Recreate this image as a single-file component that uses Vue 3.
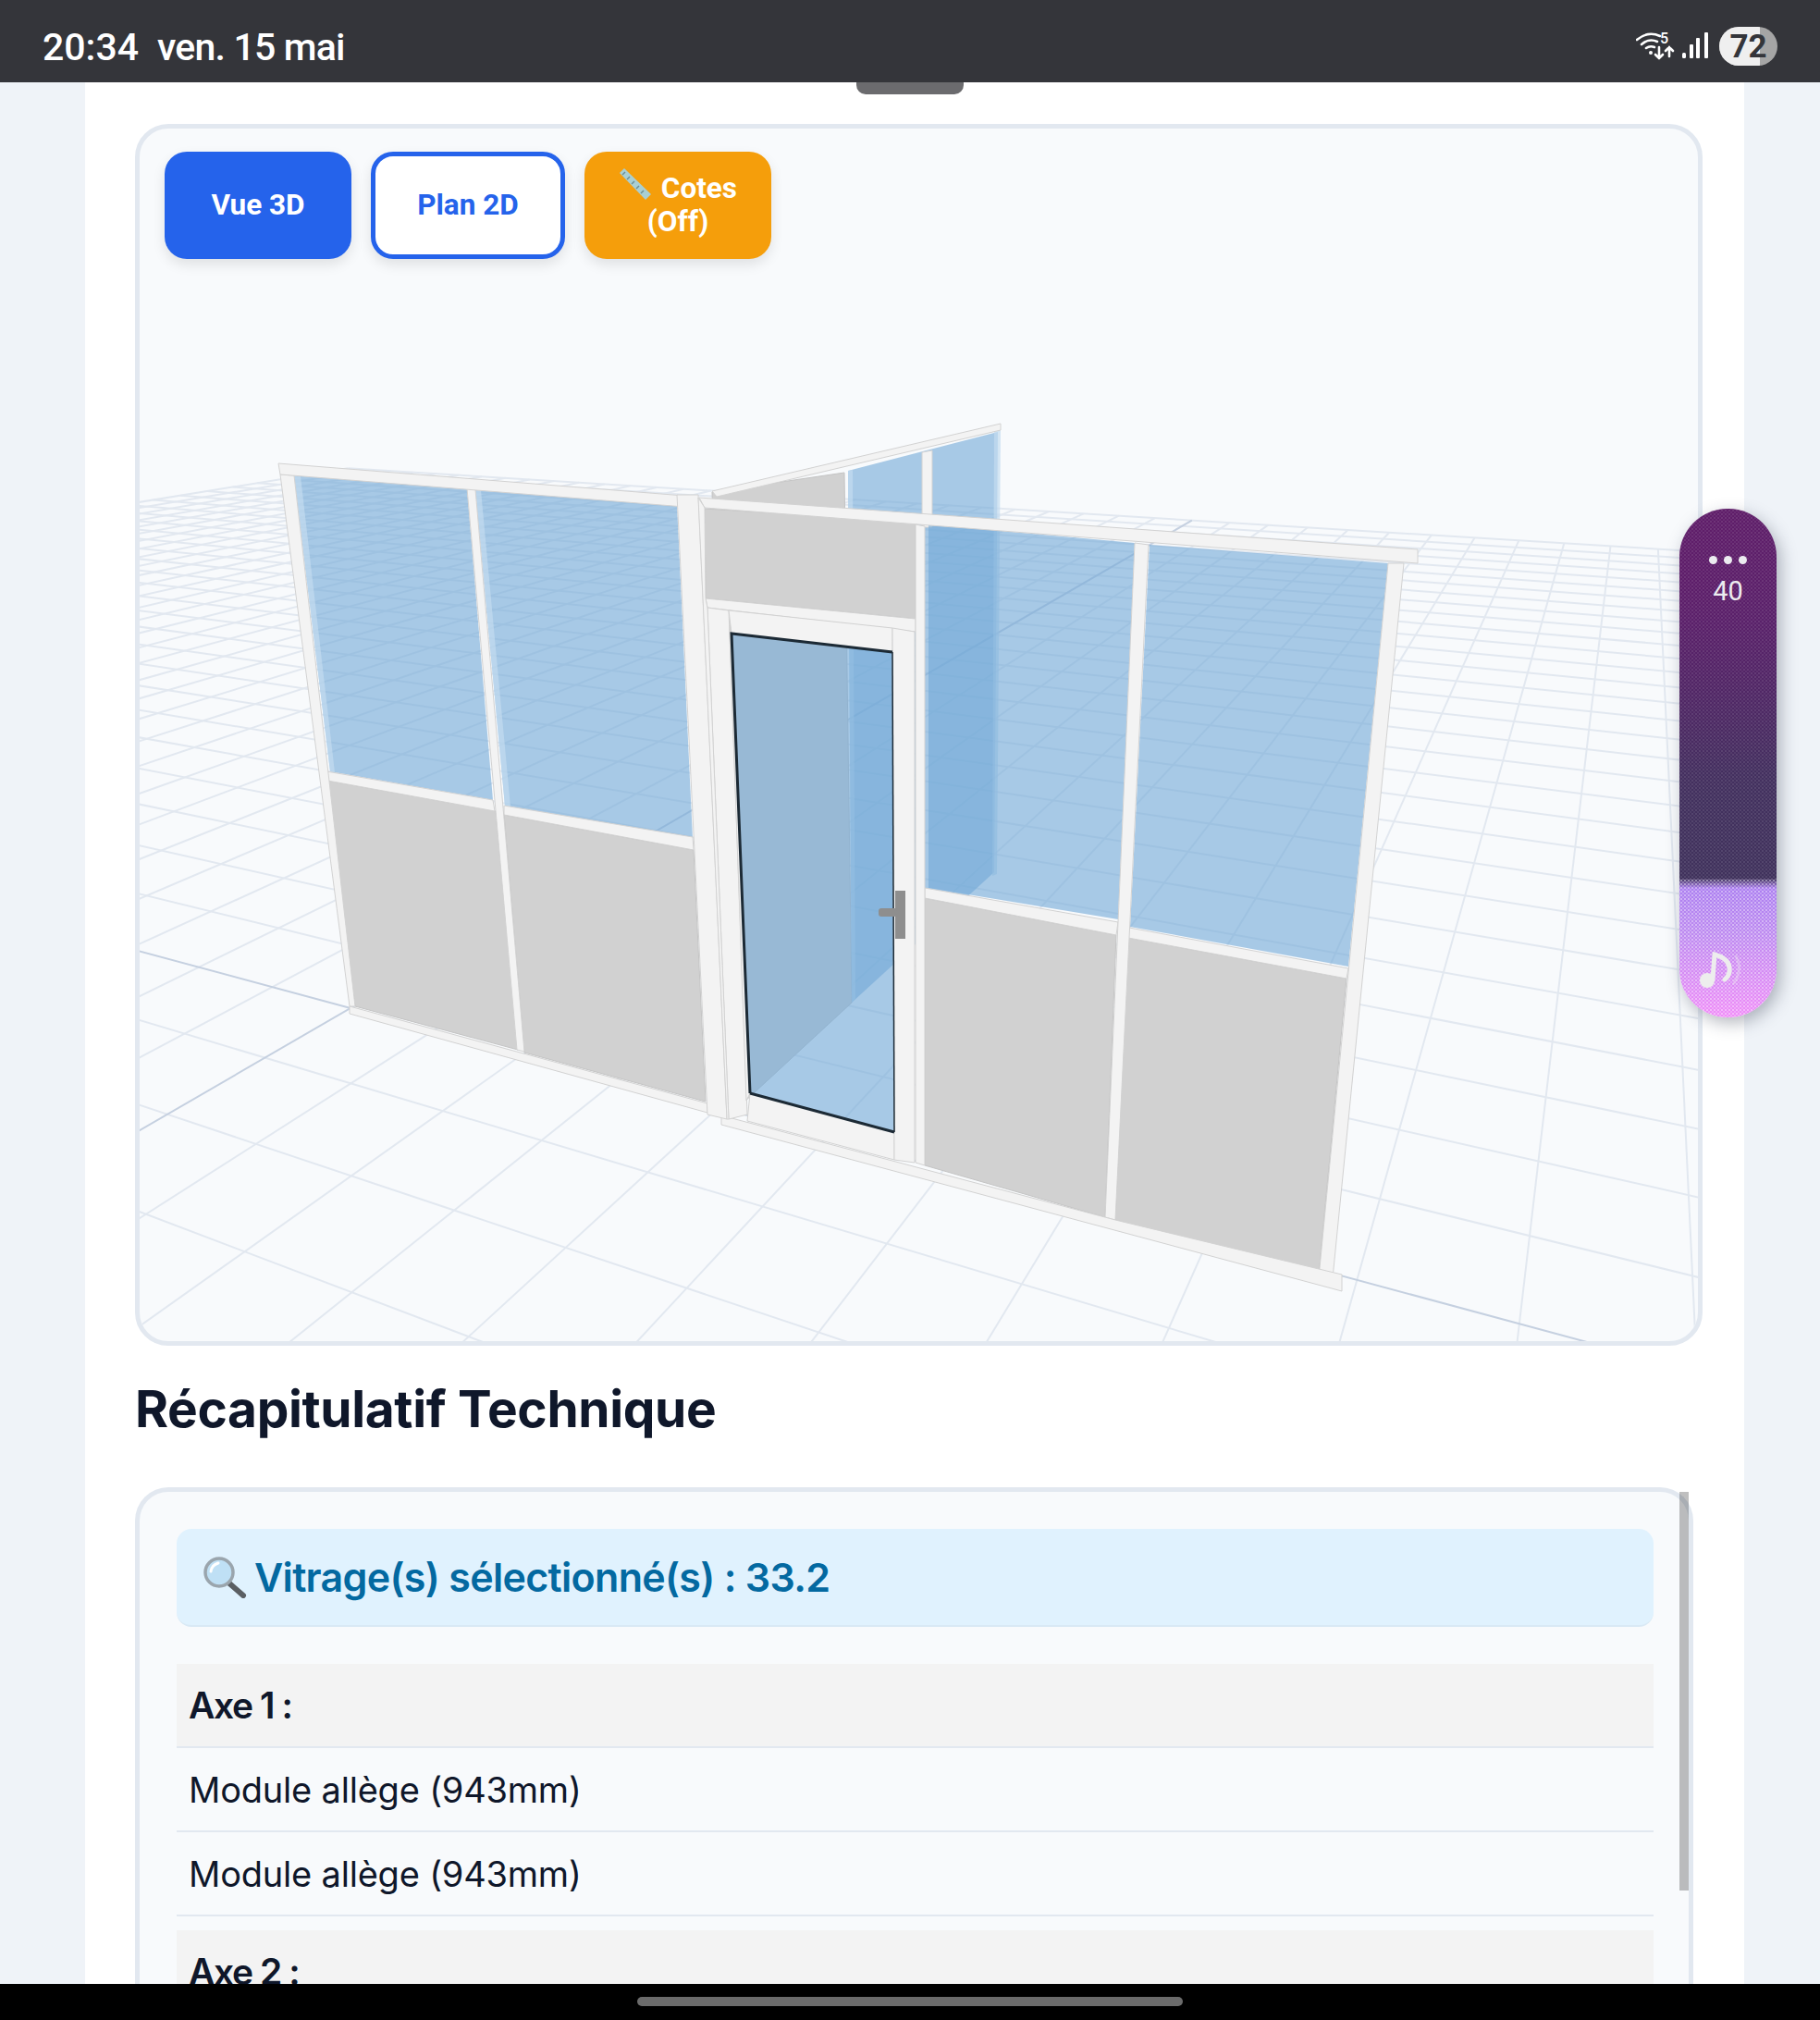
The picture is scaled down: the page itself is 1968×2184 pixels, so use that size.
<template>
  <div class="page">
    <header class="status">
      <div class="clock">
        <span class="clock-time">20:34</span>
        <span class="clock-date">ven. 15 mai</span>
      </div>
      <div class="status-icons">
        <svg class="wifi" width="42" height="38" viewBox="0 -6 42 38">
          <g fill="none" stroke="#fff" stroke-width="2.6" stroke-linecap="round">
            <path d="M1 9 Q13 -1 26 5" />
            <path d="M6 14 Q14 7 23 11" />
            <path d="M11 18 Q15 15 20 17" />
            <path d="M25 17 V29 M21 25 L25 29 L29 25" />
            <path d="M36 27 V17 M32 21 L36 17 L40 21" />
          </g>
          <circle cx="16" cy="23" r="2" fill="#fff" />
          <text x="26" y="13" class="wifi-five">5</text>
        </svg>
        <svg class="signal" width="28" height="30" viewBox="0 0 28 30">
          <rect x="0" y="22" width="4" height="6" rx="1.5" fill="#fff" />
          <rect x="8" y="13" width="4" height="15" rx="1" fill="#fff" />
          <rect x="15" y="6" width="4" height="22" rx="1" fill="#fff" />
          <rect x="24" y="0" width="4" height="28" rx="1" fill="#fff" />
        </svg>
        <div class="battery">
          <div class="battery-fill"></div>
          <span class="battery-text">72</span>
        </div>
      </div>
    </header>

    <main class="main">
      <div class="sheet">
        <section class="viewer">
          <svg class="scene" width="1685" height="1311" viewBox="151 139 1685 1311">
            <line
              v-for="(l, i) in gridLines"
              :key="i"
              :x1="l.x1"
              :y1="l.y1"
              :x2="l.x2"
              :y2="l.y2"
              :stroke="l.axis ? '#c5d0e0' : '#e2e8f0'"
              stroke-width="2"
            />
            <polygon
              v-for="(s, i) in shapes"
              :key="'s' + i"
              :points="s.pts"
              :class="s.kind"
            />
            <path class="door-edge" d="M811 1182 L791 685 L965 705" />
            <path class="door-edge" d="M811 1182 L967 1224" />
            <path class="door-thin" d="M965 705 L967 1224" />
            <rect x="968" y="963" width="11" height="52" fill="#8e8e8e" />
            <rect x="950" y="982" width="20" height="9" rx="3" fill="#8e8e8e" />
          </svg>

          <div class="view-tabs">
            <button class="tab tab-active">Vue 3D</button>
            <button class="tab tab-plan">Plan 2D</button>
            <button class="tab tab-cotes">
              <svg class="ruler" width="36" height="34" viewBox="0 0 36 34">
                <polygon points="1,5 6,0 35,28 29,34" fill="#a9cfd3" />
                <path d="M7 4 L4 7 M12 9 L9 12 M17 14 L14 17 M22 19 L19 22 M27 24 L24 27" stroke="#6f8f94" stroke-width="1.5" />
              </svg>
              Cotes<br />(Off)
            </button>
          </div>
        </section>

        <h2 class="title">Récapitulatif Technique</h2>

        <section class="recap">
          <div class="glazing">
            <svg class="loupe" width="48" height="46" viewBox="0 0 48 46">
              <path d="M28 29 L44 43" stroke="#5b5f63" stroke-width="6" stroke-linecap="round" />
              <circle cx="18" cy="18" r="15" fill="#bfe0f5" stroke="#9aa5ad" stroke-width="3.5" />
              <path d="M9 17 Q10 10 17 8" stroke="#fff" stroke-width="3" fill="none" stroke-linecap="round" />
            </svg>
            <span>Vitrage(s) sélectionné(s) : 33.2</span>
          </div>

          <div v-for="group in axes" :key="group.name" class="group">
            <div class="row row-head">{{ group.name }}</div>
            <div v-for="(m, i) in group.modules" :key="i" class="row">{{ m }}</div>
          </div>

          <div class="scroll-thumb"></div>
        </section>
      </div>
    </main>

    <footer class="navbar">
      <div class="home-pill"></div>
    </footer>

    <div class="handle"></div>

    <aside class="volume">
      <div class="volume-track">
        <div class="dots"><i></i><i></i><i></i></div>
        <span class="volume-num">40</span>
      </div>
      <div class="volume-fill">
        <svg class="note" width="50" height="44" viewBox="0 0 50 44">
          <circle cx="9" cy="31" r="8" fill="#ededed" />
          <path d="M15 30 L17 3 Q35 8 33 22 Q32 27 28 30" fill="none" stroke="#ededed" stroke-width="5" stroke-linecap="round" />
          <path d="M40 5 Q48 18 38 34" fill="none" stroke="#ededed" stroke-width="3" opacity="0.35" stroke-linecap="round" />
        </svg>
      </div>
    </aside>
  </div>
</template>

<script setup>
// floor grid of the 3D view, projected by hand from two vanishing points
const V1 = [-2421, 334]
const V2 = [1778, 279]
const O = [379, 1090]
const p = -0.0311
const q = 0.062
const N = 30

const project = (a, b) => {
  const d = p * a + q * b + 1
  return [
    (p * V1[0] * a + q * V2[0] * b + O[0]) / d,
    (p * V1[1] * a + q * V2[1] * b + O[1]) / d,
  ]
}

const gridLines = []
for (let i = -N; i <= N; i++) {
  const bMin = Math.max(-N, (0.05 - 1 - p * i) / q)
  if (bMin < N) {
    const [x1, y1] = project(i, bMin)
    const [x2, y2] = project(i, N)
    gridLines.push({ x1, y1, x2, y2, axis: i === 0 })
  }
  const aMax = Math.min(N, (0.95 + q * i) / -p)
  if (aMax > -N) {
    const [x1, y1] = project(-N, i)
    const [x2, y2] = project(aMax, i)
    gridLines.push({ x1, y1, x2, y2, axis: i === 0 })
  }
}
gridLines.sort((a, b) => a.axis - b.axis)

// partition, in paint order: back wall first, front frames last
const shapes = [
  { kind: 'grey', pts: '770,532 913,511 921,1084 790,1205' },
  { kind: 'glass', pts: '917,509 1079,467 1075,943 921,1084' },
  { kind: 'frame', pts: '997,489 1008,487 1008,570 997,570' },
  { kind: 'side', pts: '1075,466 1082,464 1078,945 1073,947' },
  { kind: 'side', pts: '917,509 922,508 925,1080 921,1084' },
  { kind: 'frame', pts: '770,531 1082,458 1082,465 775,537' },

  { kind: 'glass', pts: '318,514 505,528 533,865 357,834' },
  { kind: 'glass', pts: '514,529 732,546 749,907 546,871' },
  { kind: 'side', pts: '318,514 325,515 362,835 357,834' },
  { kind: 'side', pts: '514,529 520,530 552,872 546,871' },
  { kind: 'grey', pts: '354,844 536,877 560,1135 384,1088' },
  { kind: 'grey', pts: '545,881 750,919 763,1191 567,1138' },
  { kind: 'frame', pts: '353,834 533,865 535,877 354,844' },
  { kind: 'frame', pts: '545,871 749,905 750,919 545,881' },
  { kind: 'frame', pts: '303,513 318,514 384,1088 378,1088' },
  { kind: 'frame', pts: '505,528 514,529 567,1137 559,1135' },
  { kind: 'frame', pts: '378,1088 765,1193 765,1203 378,1096' },
  { kind: 'frame', pts: '301,501 740,536 740,548 303,513' },

  { kind: 'glass', pts: '1004,567 1227,587 1209,994 1004,960' },
  { kind: 'glass', pts: '1243,589 1501,609 1458,1045 1222,1002' },
  { kind: 'grey', pts: '1000,971 1207,1011 1195,1316 1000,1260' },
  { kind: 'grey', pts: '1220,1014 1456,1058 1426,1379 1206,1319' },
  { kind: 'grey', pts: '762,550 990,564 990,669 763,647' },
  { kind: 'frame', pts: '1000,960 1209,997 1207,1011 1000,971' },
  { kind: 'frame', pts: '1221,1003 1458,1047 1456,1058 1220,1014' },
  { kind: 'frame', pts: '1227,587 1242,589 1206,1319 1195,1316' },
  { kind: 'frame', pts: '1501,609 1518,609 1441,1382 1426,1381' },
  { kind: 'frame', pts: '780,1206 1206,1319 1451,1378 1451,1396 1440,1393 780,1216' },
  { kind: 'frame', pts: '756,538 1533,594 1533,609 762,549' },

  { kind: 'glass', pts: '791,685 965,705 967,1224 811,1182' },
  { kind: 'frame', pts: '763,647 990,669 990,683 765,657' },
  { kind: 'frame', pts: '765,657 788,660 808,1205 788,1210' },
  { kind: 'frame', pts: '788,660 965,679 965,705 791,685' },
  { kind: 'frame', pts: '789,680 791,685 811,1182 807,1190' },
  { kind: 'frame', pts: '811,1182 967,1224 967,1254 808,1212' },
  { kind: 'frame', pts: '965,679 989,683 989,1257 967,1254' },
  { kind: 'frame', pts: '990,567 1000,569 1000,1260 990,1257' },
  { kind: 'frame', pts: '732,535 755,535 786,1210 765,1205' },
  { kind: 'frame', pts: '755,538 762,549 763,647 765,657 788,1210 786,1210' },
]

const axes = [
  { name: 'Axe 1 :', modules: ['Module allège (943mm)', 'Module allège (943mm)'] },
  { name: 'Axe 2 :', modules: [] },
]
</script>

<style scoped>
.page {
  position: relative;
  width: 1968px;
  height: 2184px;
  display: flex;
  flex-direction: column;
  overflow: hidden;
  background: #eff3f8;
  font-family: Inter, "Liberation Sans", sans-serif;
}

/* status bar */
.status {
  flex: none;
  height: 89px;
  padding: 0 46px;
  display: flex;
  align-items: center;
  justify-content: space-between;
  background: #34353a;
  color: #fff;
  font-family: Roboto, sans-serif;
}
.clock {
  display: flex;
  gap: 20px;
  font-size: 41px;
  font-weight: 500;
  margin-top: 12px;
}
.clock-date {
  letter-spacing: -0.8px;
}
.status-icons {
  display: flex;
  align-items: center;
  margin-top: 11px;
}
.wifi {
  margin-right: 8px;
  margin-top: -6px;
}
.wifi-five {
  fill: #fff;
  font-family: Roboto, sans-serif;
  font-size: 16px;
  font-weight: 500;
}
.signal {
  margin-right: 12px;
}
.battery {
  position: relative;
  width: 63px;
  height: 42px;
  border-radius: 21px;
  background: #a5a5a5;
  overflow: hidden;
  display: flex;
  align-items: center;
  justify-content: center;
}
.battery-fill {
  position: absolute;
  left: 0;
  top: 0;
  bottom: 0;
  width: 44px;
  background: #efefef;
}
.battery-text {
  position: relative;
  font-size: 35px;
  font-weight: 700;
  color: #34353a;
}

/* page body */
.main {
  flex: 1;
  min-height: 0;
  overflow: hidden;
  padding: 0 82px 0 92px;
}
.sheet {
  height: 100%;
  padding: 45px 45px 0 54px;
  background: #fff;
  display: flex;
  flex-direction: column;
}

/* 3D viewer */
.viewer {
  position: relative;
  flex: none;
  height: 1321px;
  box-sizing: border-box;
  border: 5px solid #e2e8f0;
  border-radius: 36px;
  background: #f8fafc;
  overflow: hidden;
}
.scene {
  display: block;
}
.grey {
  fill: #d1d1d1;
  stroke: #c4c4c4;
  stroke-width: 1;
}
.glass {
  fill: #71a8d7;
  fill-opacity: 0.6;
}
.side {
  fill: #c3dcef;
  fill-opacity: 0.7;
}
.frame {
  fill: #f3f3f3;
  stroke: #d2d2d2;
  stroke-width: 1;
}
.door-edge {
  fill: none;
  stroke: #1c2a35;
  stroke-width: 3;
}
.door-thin {
  fill: none;
  stroke: #1c2a35;
  stroke-width: 1.5;
}
.view-tabs {
  position: absolute;
  left: 27px;
  top: 25px;
  display: flex;
  gap: 21px;
}
.tab {
  box-sizing: border-box;
  width: 202px;
  height: 116px;
  padding: 0 10px;
  border: none;
  border-radius: 24px;
  font-family: Roboto, sans-serif;
  font-size: 31.5px;
  font-weight: 700;
  line-height: 36px;
  color: #fff;
  box-shadow: 0 6px 14px rgba(0, 0, 0, 0.1);
}
.tab-active {
  background: #2563eb;
}
.tab-plan {
  width: 210px;
  background: #fff;
  border: 5px solid #2563eb;
  color: #2563eb;
}
.tab-cotes {
  background: #f59e0b;
  padding-bottom: 5px;
}
.ruler {
  vertical-align: -2px;
  margin-right: 2px;
}

/* recap */
.title {
  margin: 32px 0 49px;
  font-size: 55px;
  line-height: 72px;
  font-weight: 700;
  color: #0f172a;
  letter-spacing: -0.35px;
}
.recap {
  position: relative;
  flex: 1;
  min-height: 0;
  margin-right: 10px;
  padding: 40px 38px 0 40px;
  border: 5px solid #e2e8f0;
  border-bottom: none;
  border-radius: 36px 36px 0 0;
  background: #f8fafc;
}
.glazing {
  display: flex;
  align-items: center;
  gap: 8px;
  height: 106px;
  box-sizing: border-box;
  padding-left: 28px;
  margin-bottom: 40px;
  border-radius: 16px;
  border-bottom: 2px solid #d9e9f5;
  background: #e0f2fe;
  color: #0369a1;
  font-size: 43px;
  font-weight: 600;
  letter-spacing: -0.7px;
}
.group {
  margin-bottom: 15px;
}
.row {
  display: flex;
  align-items: center;
  height: 91px;
  box-sizing: border-box;
  padding: 0 13px;
  border-bottom: 2px solid #e2e8f0;
  color: #0f172a;
  font-size: 38px;
  letter-spacing: -0.2px;
}
.row-head {
  background: #f3f3f3;
  font-size: 39px;
  font-weight: 600;
  letter-spacing: -1.4px;
}
.scroll-thumb {
  position: absolute;
  top: 0;
  right: 0;
  width: 10px;
  height: 431px;
  background: rgba(0, 0, 0, 0.25);
}

/* bottom bar */
.navbar {
  flex: none;
  height: 39px;
  background: #000;
  display: flex;
  justify-content: center;
  padding-top: 14px;
  box-sizing: border-box;
}
.home-pill {
  width: 590px;
  height: 10px;
  border-radius: 5px;
  background: #6b6b6b;
}

/* floating bits */
.handle {
  position: absolute;
  left: 926px;
  top: 89px;
  width: 116px;
  height: 13px;
  border-radius: 0 0 10px 10px;
  background: #6b6b6e;
}
.volume {
  position: absolute;
  top: 550px;
  right: 47px;
  width: 105px;
  height: 550px;
  border-radius: 52px;
  overflow: hidden;
  display: flex;
  flex-direction: column;
  box-shadow: 4px 6px 18px rgba(40, 50, 70, 0.35);
}
.volume-track {
  flex: 1;
  display: flex;
  flex-direction: column;
  align-items: center;
  padding-top: 51px;
  background:
    radial-gradient(rgba(255, 255, 255, 0.1) 1px, transparent 1.4px) 0 0 / 4px 4px,
    radial-gradient(rgba(255, 255, 255, 0.07) 1px, transparent 1.4px) 2px 2px / 4px 4px,
    radial-gradient(circle at 0 18%, rgba(105, 15, 105, 0.3), transparent 70%),
    linear-gradient(180deg, #5d2169 0%, #56256a 30%, #43305f 70%, #40325c 100%);
}
.dots {
  display: flex;
  gap: 7px;
}
.dots i {
  width: 9px;
  height: 9px;
  border-radius: 50%;
  background: #ececf0;
}
.volume-num {
  margin-top: 11px;
  font-family: Roboto, sans-serif;
  font-size: 29px;
  line-height: 36px;
  color: #ececf0;
}
.volume-fill {
  position: relative;
  flex: none;
  height: 150px;
  margin-top: -3px;
  background:
    radial-gradient(rgba(255, 255, 255, 0.4) 1px, transparent 1.4px) 0 0 / 4px 4px,
    radial-gradient(rgba(255, 255, 255, 0.25) 1px, transparent 1.4px) 2px 2px / 4px 4px,
    linear-gradient(180deg, #40325c 0%, #ac7ff0 7%, #bd8af0 40%, #f08ef8 100%);
}
.note {
  position: absolute;
  left: 21px;
  top: 79px;
}
</style>

<style>
html,
body {
  margin: 0;
  background: #eff3f8;
}
</style>
